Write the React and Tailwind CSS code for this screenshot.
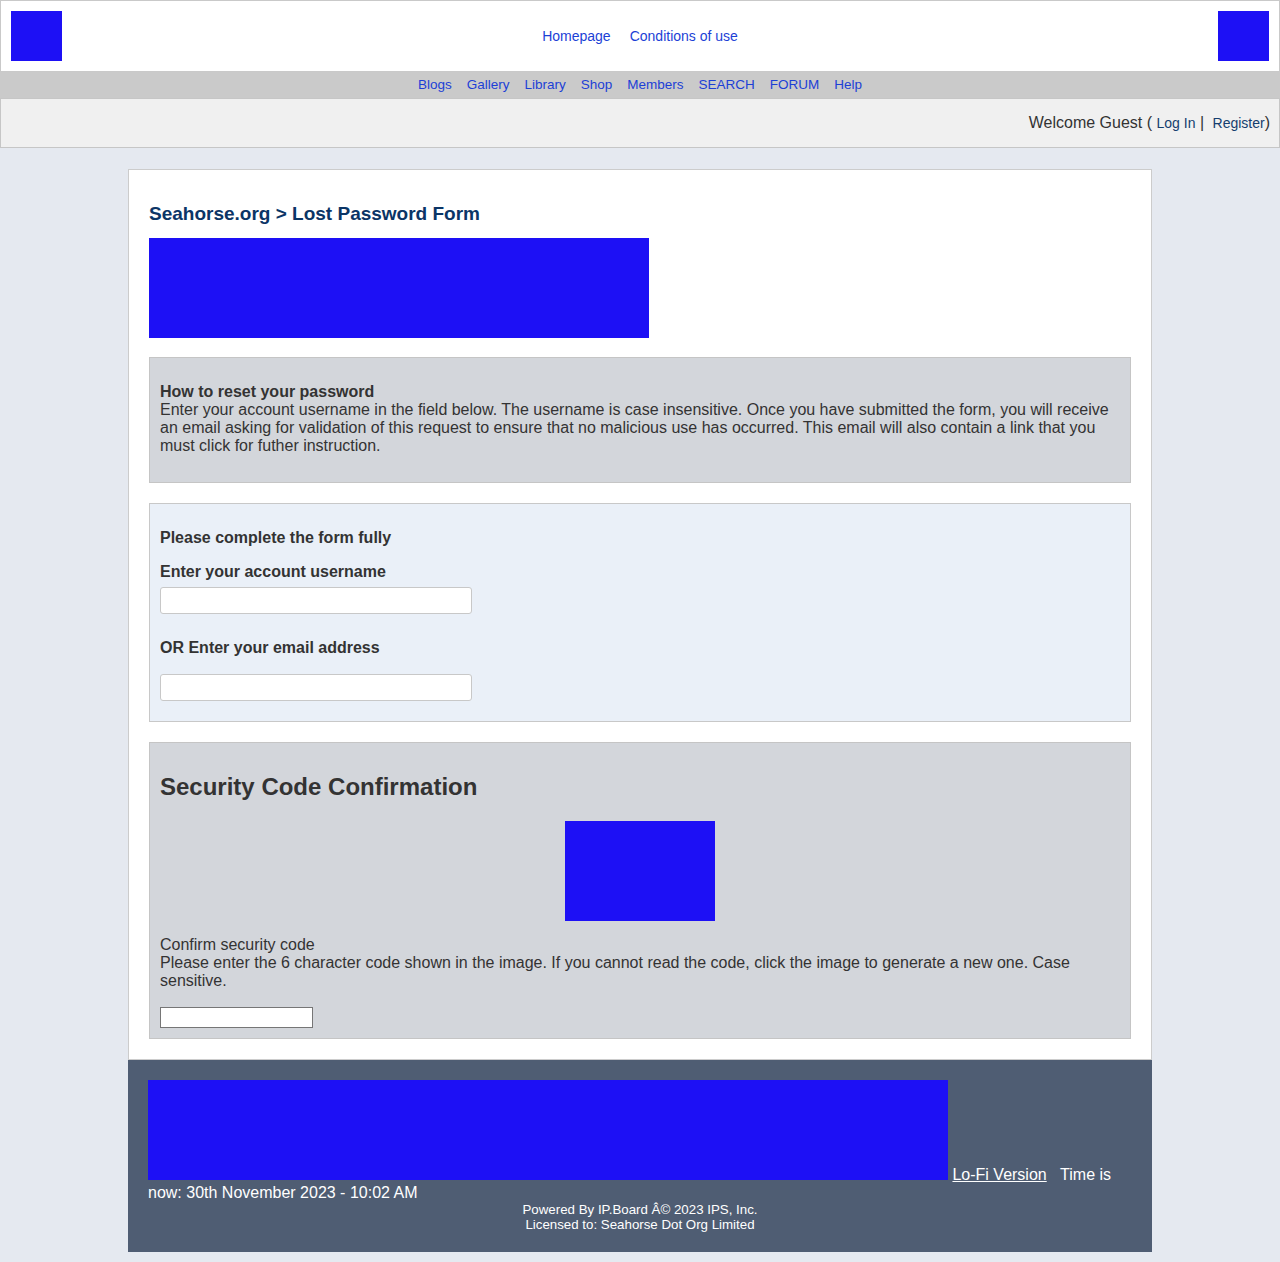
import React from "react";

const font = { fontFamily: '"Liberation Sans", Arial, Helvetica, sans-serif' };

function Logo({ className = "" }) {
  return <div className={"bg-[#1d10f5] " + className} />;
}

function TopHeader() {
  return (
    <div className="flex items-center justify-between border border-[#c9c9c9] bg-white p-[10px]">
      <Logo className="w-[51px] h-[50px]" />
      <div className="flex gap-[19px] text-[14px] text-[#1c3fd6]">
        <a href="#">Homepage</a>
        <a href="#">Conditions of use</a>
      </div>
      <Logo className="w-[51px] h-[50px]" />
    </div>
  );
}

function SubNav() {
  const links = ["Blogs", "Gallery", "Library", "Shop", "Members", "SEARCH", "FORUM", "Help"];
  return (
    <div className="flex h-[26px] items-center justify-center gap-[15px] bg-[#cacaca] pt-[1px] text-[13.5px] text-[#1c3fd6]">
      {links.map((l) => (
        <a key={l} href="#">
          {l}
        </a>
      ))}
    </div>
  );
}

function WelcomeBar() {
  return (
    <div className="flex h-[50px] items-center justify-end border border-[#c6c6c6] bg-[#f0f0f0] pr-[9px] text-[16px] text-[#333]">
      <span>
        Welcome Guest ({" "}
        <a href="#" className="text-[14px] text-[#153e6e]">
          Log In
        </a>{" "}
        |{" "}
        <a href="#" className="ml-[4px] text-[14px] text-[#153e6e]">
          Register
        </a>
        )
      </span>
    </div>
  );
}

function ResetInfo() {
  return (
    <div className="border border-[#c5c5c5] bg-[#d3d6db] px-[10px] pt-[25px] pb-[27px] text-[16px] leading-[18px] text-[#333]">
      <div className="font-bold">How to reset your password</div>
      <div>
        Enter your account username in the field below. The username is case insensitive. Once
        you have submitted the form, you will receive an email asking for validation of this
        request to ensure that no malicious use has occurred. This email will also contain a link
        that you must click for futher instruction.
      </div>
    </div>
  );
}

function RequestForm() {
  return (
    <div className="border border-[#c8c8c8] bg-[#eaf0f8] px-[10px] pt-[25px] pb-[20px] text-[16px] leading-[18px] text-[#333]">
      <div className="font-bold">Please complete the form fully</div>
      <div className="mt-[16px] font-bold">Enter your account username</div>
      <input
        type="text"
        className="mt-[6px] block h-[27px] w-[312px] rounded-[3px] border border-[#c8c8c8] bg-white"
      />
      <div className="mt-[25px] font-bold">OR Enter your email address</div>
      <input
        type="text"
        className="mt-[17px] block h-[27px] w-[312px] rounded-[3px] border border-[#c8c8c8] bg-white"
      />
    </div>
  );
}

function SecurityCode() {
  return (
    <div className="border border-[#c5c5c5] bg-[#d3d6db] px-[10px] pt-[31px] pb-[10px] text-[16px] leading-[18px] text-[#333]">
      <h3 className="text-[24px] font-bold leading-[26px]">Security Code Confirmation</h3>
      <div className="mt-[21px] flex justify-center">
        <div className="h-[100px] w-[150px] bg-[#1d10f5]" />
      </div>
      <div className="mt-[15px]">Confirm security code</div>
      <div>
        Please enter the 6 character code shown in the image. If you cannot read the code, click
        the image to generate a new one. Case sensitive.
      </div>
      <input
        type="text"
        className="mt-[17px] block h-[21px] w-[153px] border border-[#767676] bg-white"
      />
    </div>
  );
}

function Footer() {
  return (
    <div className="bg-[#4f5d73] px-[20px] pt-[20px] pb-[20px] text-white">
      <div className="text-[16px] leading-[18px]">
        <div className="inline-block h-[100px] w-[800px] bg-[#1d10f5] align-baseline" />{" "}
        <a href="#" className="underline">
          Lo-Fi Version
        </a>
        {"\u00a0\u00a0\u00a0"}Time is now: 30th November 2023 - 10:02 AM
      </div>
      <div className="text-center text-[13.3px] leading-[15px]">
        <div>Powered By IP.Board Â© 2023 IPS, Inc.</div>
        <div>Licensed to: Seahorse Dot Org Limited</div>
      </div>
    </div>
  );
}

export default function App() {
  return (
    <div style={font} className="min-h-[1262px] bg-[#e5e9f0] pb-[10px]">
      <TopHeader />
      <SubNav />
      <WelcomeBar />

      <div className="mx-auto mt-[21px] w-[1024px]">
        <div className="border border-[#cccccc] bg-white p-[20px]">
          <h2 className="py-[12px] text-[19px] font-bold leading-[24px] text-[#0b3566]">
            Seahorse.org &gt; Lost Password Form
          </h2>
          <div className="h-[100px] w-[500px] bg-[#1d10f5]" />

          <div className="mt-[19px] space-y-[20px]">
            <ResetInfo />
            <RequestForm />
            <SecurityCode />
          </div>
        </div>
        <Footer />
      </div>
    </div>
  );
}
